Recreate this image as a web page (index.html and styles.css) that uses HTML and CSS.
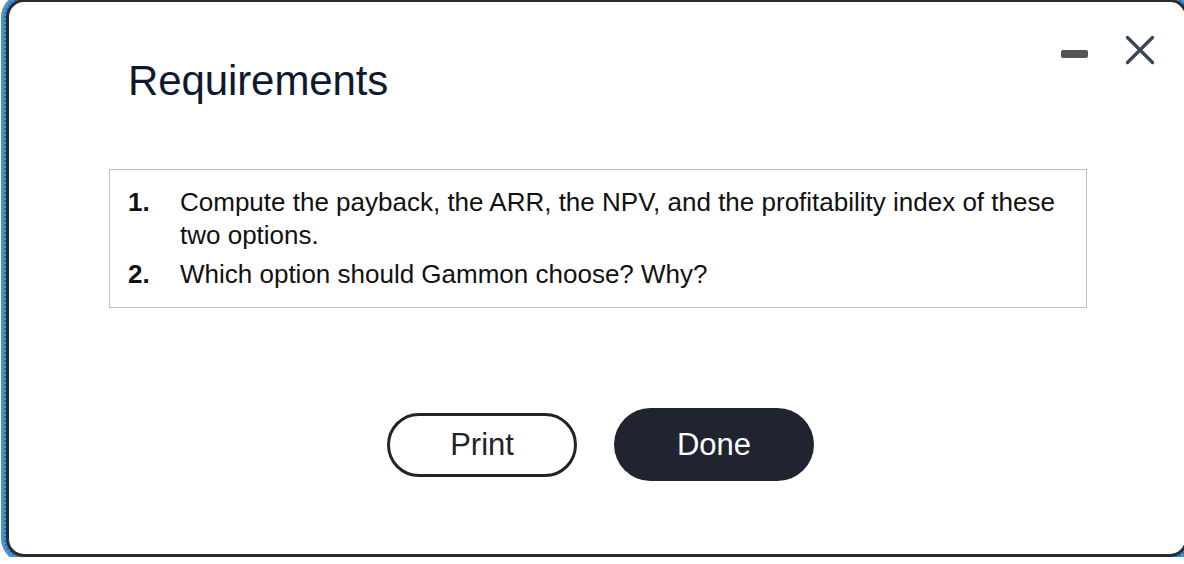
FILE: index.html
```html
<!DOCTYPE html>
<html>
<head>
<meta charset="utf-8">
<link rel="stylesheet" href="styles.css">
</head>
<body>
<div class="dialog">
  <div class="header">
    <h1 class="title">Requirements</h1>
    <div class="controls">
      <span class="minimize"></span>
      <svg class="close" width="30" height="30" viewBox="0 0 30 30" aria-label="Close">
        <path d="M2.5 2.5 L27.5 27.5 M27.5 2.5 L2.5 27.5" stroke="#3c4656" stroke-width="3.4" stroke-linecap="round" fill="none"/>
      </svg>
    </div>
  </div>
  <div class="box">
    <ol class="reqs">
      <li class="req"><span class="num">1.</span><span class="txt">Compute the payback, the ARR, the NPV, and the profitability index of these two options.</span></li>
      <li class="req"><span class="num">2.</span><span class="txt">Which option should Gammon choose? Why?</span></li>
    </ol>
  </div>
  <div class="actions">
    <button class="btn btn-print">Print</button>
    <button class="btn btn-done">Done</button>
  </div>
</div>
</body>
</html>
```
FILE: styles.css
```css
html, body {
  margin: 0;
  padding: 0;
  background: #ffffff;
  overflow: hidden;
  font-family: "Liberation Sans", Arial, sans-serif;
}

.dialog {
  box-sizing: border-box;
  width: 1182px;
  height: 558px;
  margin: -1px 0 0 6px;
  border: 3px solid #2b2b2b;
  border-radius: 18px;
  background: #ffffff;
  outline: 2px dotted #2c6aa0;
  outline-offset: 0;
  box-shadow: 0 0 0 5px #4b94d4;
  padding: 0;
}

.header {
  display: flex;
  justify-content: space-between;
  align-items: flex-start;
  padding: 33px 0 0 119px;
  height: 134px;
  box-sizing: border-box;
}

.title {
  margin: 22px 0 0 0;
  font-size: 42px;
  line-height: 48px;
  font-weight: 400;
  color: #0e1930;
  letter-spacing: -0.1px;
}

.controls {
  display: flex;
  align-items: flex-start;
  gap: 37px;
  margin-right: 30px;
}

.minimize {
  display: block;
  width: 27px;
  height: 8px;
  margin-top: 15px;
  border-radius: 2px;
  background: #555555;
}

.close {
  display: block;
}

.box {
  box-sizing: border-box;
  width: 978px;
  height: 139px;
  margin-left: 100px;
  margin-top: 33px;
  border: 1px solid #bdbdbd;
  padding: 16px 10px 16px 18px;
}

.reqs {
  list-style: none;
  margin: 0;
  padding: 0;
  display: flex;
  flex-direction: column;
  gap: 6px;
}

.req {
  display: flex;
  font-size: 26px;
  line-height: 33px;
  color: #111111;
}

.num {
  flex: 0 0 52px;
  font-weight: 700;
}

.txt {
  flex: 1;
}

.actions {
  display: flex;
  justify-content: center;
  align-items: center;
  gap: 37px;
  margin-top: 100px;
  padding-left: 7px;
}

.btn {
  box-sizing: border-box;
  font-family: "Liberation Sans", Arial, sans-serif;
  font-size: 31px;
  border-radius: 40px;
  cursor: pointer;
}

.btn-print {
  width: 190px;
  height: 64px;
  border: 3px solid #1f232c;
  background: #ffffff;
  color: #1f232c;
}

.btn-done {
  width: 200px;
  height: 73px;
  border: none;
  background: #1f2430;
  color: #ffffff;
}
```
